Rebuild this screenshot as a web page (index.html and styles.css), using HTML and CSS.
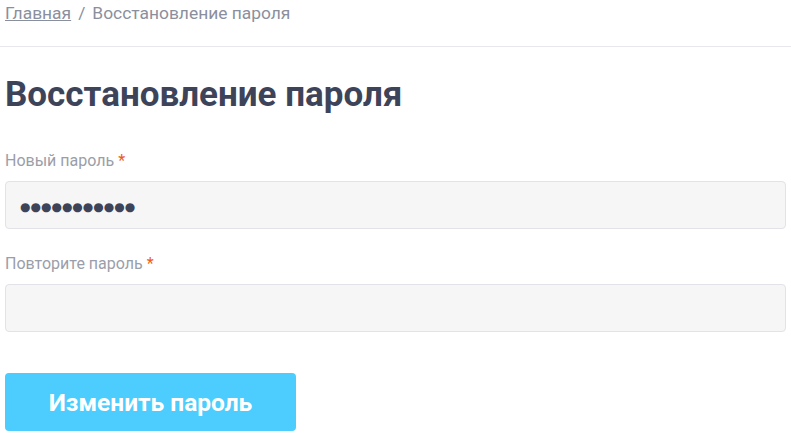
FILE: index.html
```html
<!DOCTYPE html>
<html lang="ru">
<head>
<meta charset="utf-8">
<link rel="stylesheet" href="styles.css">
</head>
<body>
<nav class="breadcrumbs">
  <a href="#" class="crumb-link">Главная</a>
  <span class="sep">/</span>
  <span class="crumb-current">Восстановление пароля</span>
</nav>
<main class="content">
  <h1 class="title">Восстановление пароля</h1>
  <form class="form">
    <div class="field">
      <label class="label">Новый пароль<span class="req">*</span></label>
      <input class="input input-dots" type="text" value="●●●●●●●●●●●" readonly>
    </div>
    <div class="field">
      <label class="label">Повторите пароль<span class="req">*</span></label>
      <input class="input" type="password" value="">
    </div>
    <button class="btn" type="button">Изменить пароль</button>
  </form>
</main>
</body>
</html>
```
FILE: styles.css
```css
* { box-sizing: border-box; }
html, body { margin: 0; padding: 0; background: #fff; }
body { font-family: Roboto, "Noto Sans", sans-serif; color: #3d4459; }
.breadcrumbs {
  display: flex;
  align-items: flex-start;
  gap: 7px;
  padding: 2px 5px 0;
  height: 47px;
  border-bottom: 1px solid #e8e8ec;
  font-size: 17.4px;
  line-height: 22px;
  color: #8a8f9e;
}
.crumb-link { color: #8a8f9e; text-decoration: underline; }
.content { padding: 0 5px; }
.title {
  margin: 27px 0 0;
  font-size: 35px;
  line-height: 42px;
  font-weight: 700;
  color: #3d4459;
}
.form { display: flex; flex-direction: column; margin-top: 35px; }
.field { display: flex; flex-direction: column; margin-bottom: 25px; }
.label { font-size: 16px; line-height: 20px; color: #9a9ea9; margin-bottom: 10px; }
.req { color: #ee5a24; margin-left: 4px; }
.input {
  height: 48px;
  border: 1px solid #e2e2e8;
  border-radius: 4px;
  background: #f6f6f6;
  padding: 0 14px;
  font-family: Roboto, sans-serif;
  font-size: 18px;
  color: #3d4459;
  outline: none;
}
.input-dots { font-family: "DejaVu Sans", sans-serif; font-size: 12px; padding-top: 3px; }
.btn {
  width: 291px;
  height: 58px;
  margin-top: 16px;
  border: none;
  border-radius: 4px;
  background: #4ccdfd;
  color: #fff;
  font-family: Roboto, sans-serif;
  font-weight: 700;
  font-size: 24.5px;
}
```
